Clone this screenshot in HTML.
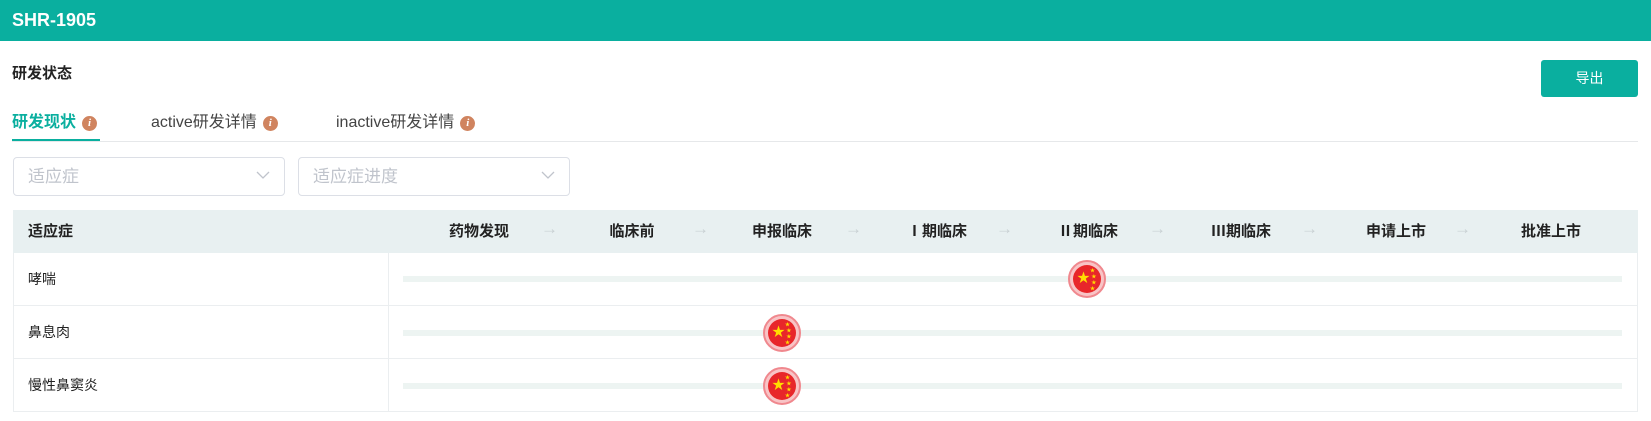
<!DOCTYPE html>
<html><head><meta charset="utf-8"><style>
*{margin:0;padding:0;box-sizing:border-box}
body{width:1651px;height:421px;background:#fff;font-family:"Liberation Sans","Noto Sans CJK SC",sans-serif;position:relative;overflow:hidden;color:#222}
.a{position:absolute}
.hd{left:0;top:0;width:1651px;height:41px;background:#0aaf9f;color:#fff;font-weight:bold;font-size:18px;line-height:40px;padding-left:12px}
.i{display:inline-block;width:15px;height:15px;border-radius:50%;background:#d0845f;color:#fff;font:italic bold 11px/15px "Liberation Serif",serif;text-align:center;vertical-align:1px;margin-left:6px}
.tab{top:108px;font-size:16px;color:#444}
.dd{top:157px;height:39px;border:1px solid #dcdfe6;border-radius:4px;color:#c0c4cc;font-size:17px;line-height:37px;padding-left:14px}
.dd svg{position:absolute;right:14px;top:13px}
.th{top:210px;left:13px;width:1625px;height:43px;background:#e8f0f1}
.st{top:210px;height:43px;line-height:43px;font-size:15px;font-weight:bold;transform:translateX(-50%);white-space:nowrap}
.ar{top:219px;color:#c8d0d3;font-size:17px;font-weight:bold}
.row{left:13px;width:1625px;height:53px;border:1px solid #ebeef0;border-top:none}
.row span{position:absolute;left:14px;top:0;line-height:53px;font-size:14px}
.row i{position:absolute;left:374px;top:0;width:1px;height:100%;background:#ebeef0}
.bar{left:403px;width:1219px;height:6px;background:#edf4f2}
.fl{width:38px;height:38px;border-radius:50%;background:#f8c4c6;border:2px solid #f0888e;padding:3px}
.fl div{width:28px;height:28px;border-radius:50%;background:#e8262a;position:relative;overflow:hidden}
</style></head><body>
<div class="a hd">SHR-1905</div>
<div class="a" style="left:12px;top:62px;font-size:15px;font-weight:bold">研发状态</div>
<div class="a" style="left:1541px;top:60px;width:97px;height:37px;background:#0aaf9f;border-radius:3px;color:#fff;font-size:14px;line-height:37px;text-align:center">导出</div>
<div class="a tab" style="left:12px;color:#0aaf9f;font-weight:bold">研发现状<span class="i">i</span></div>
<div class="a" style="left:12px;top:139px;width:88px;height:3px;background:#0aaf9f"></div>
<div class="a" style="left:12px;top:141px;width:1626px;height:1px;background:#e6e8ea"></div>
<div class="a tab" style="left:151px">active研发详情<span class="i">i</span></div>
<div class="a tab" style="left:336px">inactive研发详情<span class="i">i</span></div>
<div class="a dd" style="left:13px;width:272px">适应症<svg width="14" height="9"><path d="M1 1l6 6 6-6" fill="none" stroke="#c0c4cc" stroke-width="1.3"/></svg></div>
<div class="a dd" style="left:298px;width:272px">适应症进度<svg width="14" height="9"><path d="M1 1l6 6 6-6" fill="none" stroke="#c0c4cc" stroke-width="1.3"/></svg></div>
<div class="a th"></div>
<div class="a st" style="left:28px;transform:none;font-size:15px">适应症</div>
<div class="a st" style="left:479px">药物发现</div>
<div class="a st" style="left:632px">临床前</div>
<div class="a st" style="left:782px">申报临床</div>
<div class="a st" style="left:937px">Ⅰ期临床</div>
<div class="a st" style="left:1088px">Ⅱ期临床</div>
<div class="a st" style="left:1241px">Ⅲ期临床</div>
<div class="a st" style="left:1396px">申请上市</div>
<div class="a st" style="left:1551px">批准上市</div>
<div class="a ar" style="left:541px">→</div><div class="a ar" style="left:692px">→</div><div class="a ar" style="left:845px">→</div><div class="a ar" style="left:996px">→</div><div class="a ar" style="left:1149px">→</div><div class="a ar" style="left:1301px">→</div><div class="a ar" style="left:1454px">→</div>
<div class="a row" style="top:253px"><span>哮喘</span><i></i></div>
<div class="a row" style="top:306px"><span>鼻息肉</span><i></i></div>
<div class="a row" style="top:359px"><span>慢性鼻窦炎</span><i></i></div>
<div class="a bar" style="top:276px"></div>
<div class="a bar" style="top:330px"></div>
<div class="a bar" style="top:383px"></div>
<div class="a fl" style="left:1068px;top:260px"><div><span style="position:absolute;left:4px;top:6px;color:#ffde00;font-size:13px;line-height:13px">★</span><span style="position:absolute;left:17px;top:3px;color:#ffde00;font-size:5px;line-height:6px">★<br>&nbsp;★<br>&nbsp;★<br>★</span></div></div>
<div class="a fl" style="left:763px;top:314px"><div><span style="position:absolute;left:4px;top:6px;color:#ffde00;font-size:13px;line-height:13px">★</span><span style="position:absolute;left:17px;top:3px;color:#ffde00;font-size:5px;line-height:6px">★<br>&nbsp;★<br>&nbsp;★<br>★</span></div></div>
<div class="a fl" style="left:763px;top:367px"><div><span style="position:absolute;left:4px;top:6px;color:#ffde00;font-size:13px;line-height:13px">★</span><span style="position:absolute;left:17px;top:3px;color:#ffde00;font-size:5px;line-height:6px">★<br>&nbsp;★<br>&nbsp;★<br>★</span></div></div>
</body></html>
